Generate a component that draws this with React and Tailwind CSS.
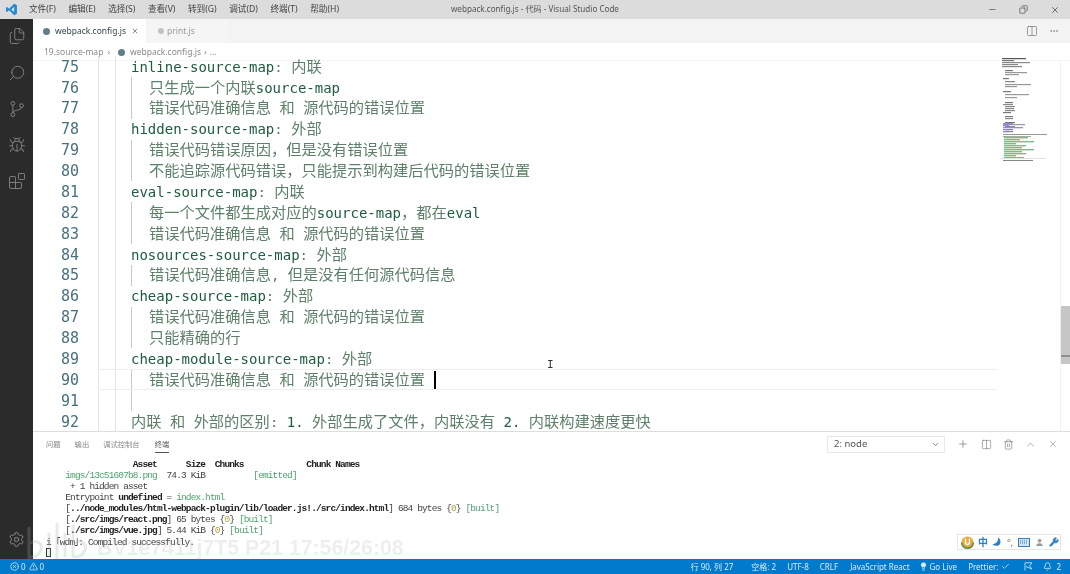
import React from "react";
import { Files, Search, Bug, Blocks, Settings, Plus, Columns2, Trash2, ChevronUp, ChevronDown, X, Minus, Copy, MoreHorizontal, CircleX, TriangleAlert, Bell, Check, Lightbulb, Wrench, User } from "lucide-react";

const mono = { fontFamily: '"DejaVu Sans Mono","Noto Sans CJK SC",monospace' };

const lines = [
  [75, 1, "inline-source-map", ": 内联"],
  [76, 2, "只生成一个内联source-map"],
  [77, 2, "错误代码准确信息 和 源代码的错误位置"],
  [78, 1, "hidden-source-map", ": 外部"],
  [79, 2, "错误代码错误原因，但是没有错误位置"],
  [80, 2, "不能追踪源代码错误，只能提示到构建后代码的错误位置"],
  [81, 1, "eval-source-map", ": 内联"],
  [82, 2, "每一个文件都生成对应的source-map，都在eval"],
  [83, 2, "错误代码准确信息 和 源代码的错误位置"],
  [84, 1, "nosources-source-map", ": 外部"],
  [85, 2, "错误代码准确信息, 但是没有任何源代码信息"],
  [86, 1, "cheap-source-map", ": 外部"],
  [87, 2, "错误代码准确信息 和 源代码的错误位置"],
  [88, 2, "只能精确的行"],
  [89, 1, "cheap-module-source-map", ": 外部"],
  [90, 2, "错误代码准确信息 和 源代码的错误位置 "],
  [91, 2, ""],
  [92, 1, "", "内联 和 外部的区别: 1. 外部生成了文件，内联没有 2. 内联构建速度更快"],
];

const menus = ["文件(F)", "编辑(E)", "选择(S)", "查看(V)", "转到(G)", "调试(D)", "终端(T)", "帮助(H)"];

function Code({ text }) {
  return text.split(/([\u4e00-\u9fff，]+|[A-Za-z0-9\-.]+)/).map((p, i) => {
    if (/^[\u4e00-\u9fff，]+$/.test(p)) return <span key={i} className="text-[15.25px] text-[#5d8068]">{p}</span>;
    if (/^[A-Za-z0-9\-.]+$/.test(p)) return <span key={i} className="text-[#1d5c3c]">{p}</span>;
    return <span key={i} className="text-[#5d8068]">{p}</span>;
  });
}

function Line({ n, level, a, b }) {
  const active = n === 90;
  return (
    <div className="flex h-[20.88px] items-center leading-[14px]">
      <div className="w-[46px] shrink-0 text-right text-[#47707f] text-[15px]">{n}</div>
      <div className={`relative ml-[19px] flex h-full flex-1 items-center pl-[33px] whitespace-pre text-[14px] ${active ? "border-y border-[#eeeeee]" : ""}`}>
        <span className="absolute left-0 top-0 h-full w-px bg-[#e4e4e4]" />
        <span className="absolute left-[17px] top-0 h-full w-px bg-[#e4e4e4]" />
        {level === 2 && <span className="absolute left-[33px] top-0 h-full w-px bg-[#c8c8c8]" />}
        <span className={level === 2 ? "pl-[18px]" : ""}>
          {a && <Code text={a} />}
          {b && <Code text={b} />}
        </span>
        {active && <span className="inline-block h-[18px] w-[2px] bg-black" />}
      </div>
    </div>
  );
}

function Minimap() {
  const rows = [
    [0,24,"#555"],[2,12,"#777"],[4,28,"#888"],[6,16,"#888"],[8,20,"#888"],[12,8,"#777"],[14,22,"#999"],[16,14,"#999"],
    [20,6,"#777"],[23,10,"#888"],[26,26,"#999"],[28,12,"#999"],[33,8,"#777"],[36,24,"#999"],[39,12,"#999"],
    [44,8,"#777"],[46,10,"#888"],[48,10,"#888"],[50,9,"#888"],[52,10,"#888"],[54,8,"#777"],[58,8,"#777"],
    [60,8,"#888"],[64,10,"#777"],[66,22,"#999"],[68,10,"#888"],[71,8,"#888"],[73,8,"#888"],
  ];
  const purple = [[65,10],[67,6],[69,20],[71,6],[73,4]];
  const green = [[0,24],[2,16],[4,30],[6,12],[8,22],[10,18],[12,30],[14,18],[16,22],[18,12],[20,20]];
  return (
    <svg width="50" height="110" viewBox="0 0 50 110" className="block">
      {rows.map(([y, w, c], i) => <rect key={i} x={i < 5 ? 2 : 3 + (i % 4 === 0 ? 0 : 2)} y={y} width={w} height="1.2" fill={c} />)}
      {purple.map(([y, w], i) => <rect key={i} x="3" y={y} width={w} height="1.3" fill="#9a86e0" />)}
      <rect x="3" y="76" width="44" height="1" fill="#999" />
      <rect x="3" y="78" width="28" height="1" fill="#aaa" />
      {green.map(([y, w], i) => <rect key={i} x="4" y={y + 79} width={w} height="1.4" fill="#7fbb86" />)}
      <rect x="0" y="100" width="46" height="1" fill="#e2e2e2" />
      <rect x="3" y="102" width="30" height="1" fill="#888" />
    </svg>
  );
}

const Term = ({ children }) => <div className="h-[11.17px] leading-[11.17px]">{children}</div>;
const G = ({ children }) => <span className="text-[#4fa36d]">{children}</span>;
const S = ({ children }) => <span className="font-bold text-[#222]">{children}</span>;

function GitIcon() {
  return (
    <svg width="18" height="18" viewBox="0 0 24 24" fill="none" stroke="currentColor" strokeWidth="1.3" className="mt-[18px]">
      <circle cx="6.5" cy="4.5" r="2.5" /><circle cx="6.5" cy="19.5" r="2.5" /><circle cx="18" cy="7.5" r="2.5" />
      <path d="M6.5 7v10M18 10c0 4-11 3-11.5 7" />
    </svg>
  );
}

export default function App() {
  return (
    <div className="relative flex h-[574px] w-[1070px] flex-col overflow-hidden bg-white blur-[0.3px]" style={{ fontFamily: '"Noto Sans","Noto Sans CJK SC",sans-serif' }}>
      {/* title bar */}
      <div className="flex h-[19px] shrink-0 items-center bg-[#dcdcdc] text-[#444] text-[8.6px]">
        <svg viewBox="0 0 24 24" width="13" height="13" className="ml-[5px]">
          <path fill="#1f8ad2" d="M17 1.5 22 4v16l-5 2.5L7.5 13.6 3.6 16.7 2 16V8l1.6-.7 3.9 3.1zM17 7l-5.6 5 5.6 5z" />
        </svg>
        <div className="ml-[11px] flex w-[310px] justify-between">
          {menus.map(m => <span key={m}>{m}</span>)}
        </div>
        <div className="ml-[112px] text-[#555] text-[8.1px]">webpack.config.js - 代码 - Visual Studio Code</div>
        <div className="ml-auto flex items-center gap-[22px] pr-[10px] text-[#555]">
          <Minus size={9} />
          <Copy size={9} className="-scale-x-100" />
          <X size={10} />
        </div>
      </div>

      <div className="flex min-h-0 flex-1">
        {/* activity bar */}
        <div className="flex w-[33px] shrink-0 flex-col items-center bg-[#2b2b2b] pt-[8px] text-[#868686]">
          <Files size={18} strokeWidth={1.2} />
          <Search size={18} strokeWidth={1.2} className="mt-[19px] -scale-x-100" />
          <GitIcon />
          <Bug size={18} strokeWidth={1.2} className="mt-[18px]" />
          <Blocks size={18} strokeWidth={1.2} className="mt-[18px]" />
          <Settings size={17} strokeWidth={1.2} className="mt-auto mb-[11px] text-[#9a9a9a]" />
        </div>

        <div className="flex min-w-0 flex-1 flex-col">
          {/* tabs */}
          <div className="flex h-[24px] shrink-0 items-center bg-[#f3f3f3] text-[8.5px]">
            <div className="flex h-full w-[113px] items-center bg-white pl-[10px] text-[#37474f]">
              <span className="h-[7px] w-[7px] rounded-full bg-[#607d8b]" />
              <span className="ml-[5px]">webpack.config.js</span>
              <X size={8} className="ml-[5px] text-[#555]" />
            </div>
            <div className="flex h-full w-[82px] items-center bg-[#f5f5f5] pl-[12px] text-[#999]">
              <span className="h-[6px] w-[6px] rounded-full bg-[#c2c2c2]" />
              <span className="ml-[3px]">print.js</span>
            </div>
            <div className="ml-auto flex items-center gap-[11px] pr-[11px] text-[#555]">
              <Columns2 size={12} strokeWidth={1.1} />
              <MoreHorizontal size={10} strokeWidth={1.2} />
            </div>
          </div>
          {/* breadcrumb */}
          <div className="flex h-[17px] shrink-0 items-center pl-[11px] pt-[1px] text-[#8a8a8a] text-[8.5px]">
            <span>19.source-map</span>
            <span className="ml-[4px] mr-[8px]">›</span>
            <span className="h-[7px] w-[7px] rounded-full bg-[#607d8b]" />
            <span className="ml-[5px]">webpack.config.js</span>
            <span className="mx-[3px]">›</span>
            <span>...</span>
          </div>
          {/* editor */}
          <div className="relative h-[371px] shrink-0 border-t border-[#f2f5fa]" style={mono}>
            <div className="-mt-[4.8px] mr-[73px]">
              {lines.map(([n, level, a, b]) => <Line key={n} n={n} level={level} a={a} b={b} />)}
            </div>
            <div className="absolute left-[967px] top-[-3px]"><Minimap /></div>
            <div className="absolute right-0 top-[245px] h-[58px] w-[9px] bg-[#c6c6c6]">
              <div className="mt-[49px] h-[2px] bg-[#8f8f8f]" />
            </div>
            <div className="absolute right-[9px] top-0 h-full w-px bg-[#f0f0f0]" />
            <div className="absolute left-[514px] top-[296px] text-[#333] text-[11px]">I</div>
          </div>
          {/* panel */}
          <div className="relative flex min-h-0 flex-1 flex-col border-t border-[#dddddd]">
            <div className="flex h-[24px] shrink-0 items-center pl-[13px] text-[#8a8a8a] text-[7.3px]">
              <span>问题</span>
              <span className="ml-[14px]">输出</span>
              <span className="ml-[14px]">调试控制台</span>
              <span className="relative ml-[15px] text-[#555]">
                终端
                <span className="absolute -bottom-[4px] left-0 h-px w-full bg-[#555]" />
              </span>
              <div className="ml-auto flex items-center pr-[12px] text-[#666]">
                <div className="flex h-[17px] w-[118px] items-center justify-between border border-[#e8e8e8] pl-[6px] pr-[4px] text-[9.5px] text-[#555]">
                  2: node
                  <ChevronDown size={9} />
                </div>
                <Plus size={12} strokeWidth={1.2} className="ml-[12px]" />
                <Columns2 size={11} strokeWidth={1.2} className="ml-[12px]" />
                <Trash2 size={11} strokeWidth={1.2} className="ml-[11px]" />
                <ChevronUp size={11} strokeWidth={1.2} className="ml-[11px]" />
                <X size={10} strokeWidth={1.2} className="ml-[12px]" />
              </div>
            </div>
            <div className="whitespace-pre pl-[13px] pt-[2.5px] text-[#444] text-[9.5px] tracking-[-0.88px]" style={{ fontFamily: '"Liberation Mono",monospace' }}>
              <Term>    <S>              Asset      Size  Chunks             Chunk Names</S></Term>
              <Term>    <G>imgs/13c51607b8.png</G>  74.3 KiB          <G>[emitted]</G></Term>
              <Term>     + 1 hidden asset</Term>
              <Term>    Entrypoint <S>undefined</S> = <G>index.html</G></Term>
              <Term>    [<S>../node_modules/html-webpack-plugin/lib/loader.js!./src/index.html</S>] 684 bytes {"{"}<span className="text-[#b0a040]">0</span>{"}"} <G>[built]</G></Term>
              <Term>    [<S>./src/imgs/react.png</S>] 65 bytes {"{"}<span className="text-[#b0a040]">0</span>{"}"} <G>[built]</G></Term>
              <Term>    [<S>./src/imgs/vue.jpg</S>] 5.44 KiB {"{"}<span className="text-[#b0a040]">0</span>{"}"} <G>[built]</G></Term>
              <Term>i ｢wdm｣: Compiled successfully.</Term>
              <div className="h-[9px] w-[5px] border border-[#333]" />
            </div>
            {/* watermark */}
            <svg width="72" height="42" viewBox="0 0 72 42" fill="none" stroke="#a8a8a8" strokeOpacity="0.25" strokeWidth="3" strokeLinecap="round" className="pointer-events-none absolute -left-[10px] top-[88px]">
              <path d="M6 8v30M6 24c8-6 14 0 12 6s-8 8-12 6" />
              <path d="M26 14v22M34 4v34M42 14v22" />
              <path d="M50 6v30M50 24c8-6 14 0 12 6s-8 8-12 6" />
            </svg>
            <div className="pointer-events-none absolute left-[64px] top-[101px] text-[21.3px] font-bold text-[#8a8a8a]/15" style={{ fontFamily: '"Liberation Sans",sans-serif' }}>BV1e7411j7T5 P21 17:56/26:08</div>
            {/* IME */}
            <div className="absolute right-[9px] top-[102px] flex h-[16px] w-[104px] items-center border border-[#e6e6e6] bg-white pl-[3px] text-[#2f7fc1] text-[10px] font-bold">
              <svg width="13" height="13" viewBox="0 0 13 13" className="shrink-0">
                <circle cx="6.5" cy="6.5" r="6" fill="#e9a93a" />
                <path d="M.7 6.5a5.8 5.8 0 0 0 11.6 0" fill="none" stroke="#5f8f4a" strokeWidth="1.6" />
                <path d="M4.5 2.5v4a2 2 0 0 0 4 0v-4" fill="none" stroke="#fff" strokeWidth="1.4" />
              </svg>
              <span className="ml-[4px] w-[10px]">中</span>
              <svg width="9" height="10" viewBox="0 0 9 10" className="ml-[4px] shrink-0">
                <path d="M6 .5c.5 4-2 6.5-5.5 6.5C2 9.5 8.5 10 8.5 5 8.5 3 7.5 1.2 6 .5z" fill="#2f7fc1" />
              </svg>
              <span className="ml-[6px] w-[8px] text-[#666] text-[9px] font-normal leading-none">°,</span>
              <svg width="12" height="9" viewBox="0 0 12 9" className="ml-[3px] shrink-0">
                <rect x=".5" y=".5" width="11" height="8" fill="#cfe3f3" stroke="#2f7fc1" />
                <path d="M2 3h8M2 5h8" stroke="#2f7fc1" strokeDasharray="1 1" />
              </svg>
              <User size={9} fill="#999" className="ml-[5px] shrink-0 text-[#999]" />
              <Wrench size={10} fill="#2f7fc1" className="ml-[5px] shrink-0" />
            </div>
          </div>
        </div>
      </div>

      {/* status bar */}
      <div className="flex h-[15px] shrink-0 items-center bg-[#007acc] pl-[10px] pr-[9px] text-[8px] text-[#dcecf7]">
        <CircleX size={9} />
        <span className="ml-[2px]">0</span>
        <TriangleAlert size={9} className="ml-[3px]" />
        <span className="ml-[2px]">0</span>
        <div className="ml-auto flex items-center">
          <span>行 90, 列 27</span>
          <span className="ml-[18px]">空格: 2</span>
          <span className="ml-[11px]">UTF-8</span>
          <span className="ml-[11px]">CRLF</span>
          <span className="ml-[12px]">JavaScript React</span>
          <Lightbulb size={9} fill="#dcecf7" className="ml-[9px]" />
          <span className="ml-[2px]">Go Live</span>
          <span className="ml-[11px]">Prettier:</span>
          <Check size={9} className="ml-[3px]" />
          <svg width="9" height="9" viewBox="0 0 9 9" fill="none" stroke="currentColor" strokeWidth=".8" className="ml-[14px]">
            <path d="M1 .8h7L5.5 3.8 8 7 2 4.5M1 .8v7.7" />
          </svg>
          <Bell size={9} className="ml-[10px]" />
          <span className="ml-[4px]">2</span>
        </div>
      </div>
    </div>
  );
}
